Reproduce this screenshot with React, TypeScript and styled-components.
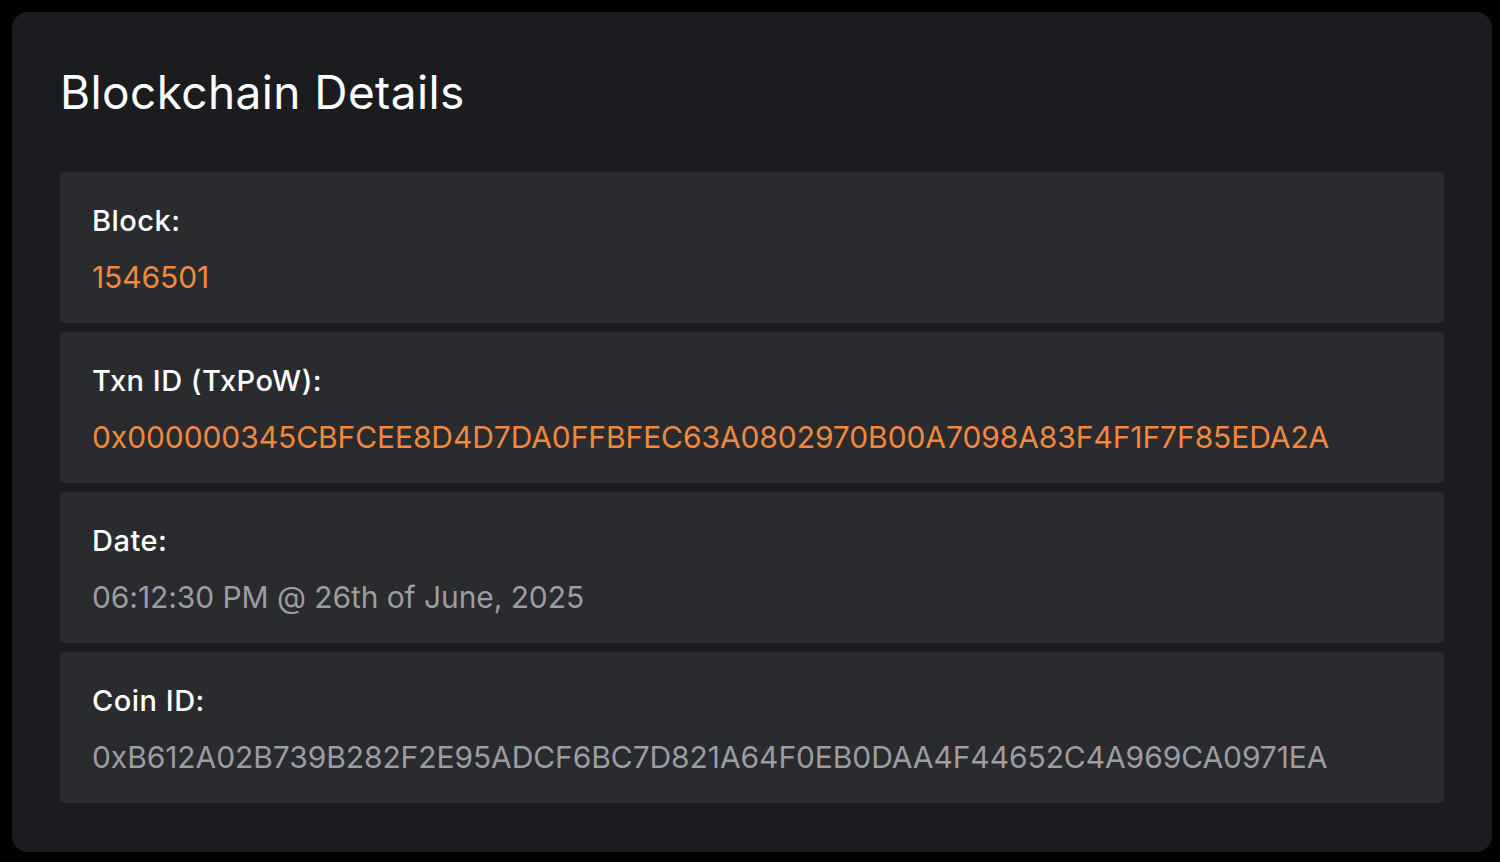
import React from "react";
import styled, { createGlobalStyle } from "styled-components";

const Global = createGlobalStyle`
  html, body { margin: 0; padding: 0; background: #000; }
  body { font-family: Inter, "Noto Sans", sans-serif; -webkit-font-smoothing: antialiased; }
  * { box-sizing: border-box; }
`;

const Page = styled.div`
  padding: 12px 8px 10px 12px;
  min-height: 862px;
`;

const Card = styled.section`
  background: #1b1c1f;
  border-radius: 16px;
  padding: 48px 48px 49px;
  display: flex;
  flex-direction: column;
`;

const Title = styled.h1`
  margin: 0 0 48px;
  color: #ffffff;
  font-size: 46px;
  font-weight: 400;
  line-height: 64px;
  letter-spacing: 0.4px;
`;

const List = styled.div`
  display: flex;
  flex-direction: column;
  gap: 9px;
`;

const Row = styled.div`
  background: #2a2b2f;
  border-radius: 4px;
  height: 151px;
  padding: 30px 32px 0;
  display: flex;
  flex-direction: column;
  gap: 18px;
`;

const Label = styled.div`
  color: #ffffff;
  font-size: 29px;
  font-weight: 500;
  line-height: 38px;
  letter-spacing: 0.5px;
`;

const Value = styled.div<{ $tone: "accent" | "muted" }>`
  color: ${(p) => (p.$tone === "accent" ? "#f0883e" : "#9c9ca3")};
  font-size: 30px;
  font-weight: 400;
  line-height: 38px;
  letter-spacing: -0.08px;
  white-space: nowrap;
`;

const rows: { label: string; value: string; tone: "accent" | "muted" }[] = [
  { label: "Block:", value: "1546501", tone: "accent" },
  {
    label: "Txn ID (TxPoW):",
    value: "0x000000345CBFCEE8D4D7DA0FFBFEC63A0802970B00A7098A83F4F1F7F85EDA2A",
    tone: "accent",
  },
  { label: "Date:", value: "06:12:30 PM @ 26th of June, 2025", tone: "muted" },
  {
    label: "Coin ID:",
    value: "0xB612A02B739B282F2E95ADCF6BC7D821A64F0EB0DAA4F44652C4A969CA0971EA",
    tone: "muted",
  },
];

export default function App() {
  return (
    <>
      <Global />
      <Page>
        <Card>
          <Title>Blockchain Details</Title>
          <List>
            {rows.map((r) => (
              <Row key={r.label}>
                <Label>{r.label}</Label>
                <Value $tone={r.tone}>{r.value}</Value>
              </Row>
            ))}
          </List>
        </Card>
      </Page>
    </>
  );
}
